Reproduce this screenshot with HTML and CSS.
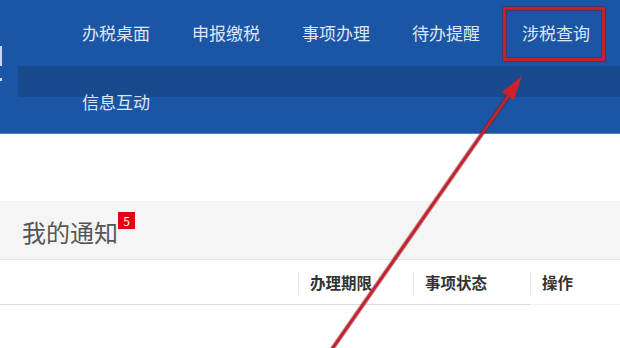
FILE: index.html
```html
<!DOCTYPE html>
<html lang="zh-CN">

<head>
    <meta charset="UTF-8">
    <meta name="viewport" content="width=device-width, initial-scale=1.0">
    <title>办税桌面</title>
    <link rel="stylesheet" href="styles.css">
</head>

<body>
    <div class="page">
        <div class="header">
            <div class="logo-edge">
                <span class="edge-a"></span>
                <span class="edge-b"></span>
            </div>
            <div class="nav-row">
                <a class="nav-item" href="#">办税桌面</a>
                <a class="nav-item" href="#">申报缴税</a>
                <a class="nav-item" href="#">事项办理</a>
                <a class="nav-item" href="#">待办提醒</a>
                <a class="nav-item" href="#">涉税查询</a>
            </div>
            <div class="nav-band"></div>
            <div class="nav-row second">
                <a class="nav-item" href="#">信息互动</a>
            </div>
        </div>

        <div class="spacer"></div>

        <div class="notice-bar">
            <div class="notice-title">我的通知<span class="badge">5</span></div>
        </div>

        <div class="table-head">
            <div class="col col-main"></div>
            <div class="col col-date">办理期限</div>
            <div class="col col-state">事项状态</div>
            <div class="col col-op">操作</div>
        </div>

        <!-- annotation drawn over the screenshot -->
        <svg class="mark" width="620" height="348" viewBox="0 0 620 348">
            <rect x="504.5" y="8.5" width="99" height="51" fill="none" stroke="#6b1018" stroke-opacity="0.35" stroke-width="5" />
            <rect x="504.5" y="8.5" width="99" height="51" fill="none" stroke="#c4202b" stroke-width="3" />
            <line x1="330" y1="352" x2="509" y2="95" stroke="#6b1018" stroke-opacity="0.35" stroke-width="5" />
            <line x1="330" y1="352" x2="509" y2="95" stroke="#c4222c" stroke-width="3" />
            <polygon points="522,76 514,100 502,92" fill="#d0202a" />
        </svg>
    </div>
</body>

</html>
```

FILE: styles.css
```css
body {
    margin: 0;
    background-color: #ffffff;
    font-family: "Noto Sans CJK SC", "Noto Sans", sans-serif;
}

.page {
    position: relative;
    width: 620px;
    height: 348px;
    overflow: hidden;
}

.header {
    position: relative;
    height: 133px;
    background-color: #1b55a5;
    border-bottom: 1px solid #4f82c8;
}

.logo-edge {
    position: absolute;
    left: 0;
    top: 46px;
}

.edge-a,
.edge-b {
    display: block;
    width: 2px;
    background-color: #c7d8ef;
}

.edge-a {
    height: 20px;
}

.edge-b {
    height: 3px;
    margin-top: 12px;
}

.nav-row {
    display: flex;
    height: 66px;
    align-items: center;
    padding-left: 82px;
}

.nav-item {
    flex-shrink: 0;
    width: 110px;
    font-size: 17px;
    line-height: 20px;
    color: #dce6f4;
    text-decoration: none;
}

.nav-band {
    height: 31px;
    margin-left: 18px;
    background-color: #1a4a8e;
}

.nav-row.second {
    height: 36px;
    align-items: flex-start;
}

.nav-row.second .nav-item {
    margin-top: -5px;
}

.spacer {
    height: 67px;
}

.notice-bar {
    height: 58px;
    background-color: #f5f5f5;
    border-bottom: 1px solid #e8e8e8;
    display: flex;
    align-items: center;
    padding-left: 22px;
}

.notice-title {
    display: flex;
    align-items: flex-start;
    font-size: 24px;
    line-height: 30px;
    color: #555555;
    margin-top: 4px;
}

.badge {
    width: 17px;
    height: 17px;
    margin-top: -5px;
    background-color: #e60012;
    color: #ffffff;
    font-size: 12px;
    line-height: 17px;
    text-align: center;
}

.table-head {
    display: flex;
    height: 45px;
    align-items: center;
}

.col {
    height: 45px;
    display: flex;
    align-items: center;
    box-sizing: border-box;
    font-size: 15.5px;
    font-weight: bold;
    color: #333333;
    border-bottom: 1px solid #dcdcdc;
}

.col-main {
    width: 298px;
}

.col-date,
.col-state,
.col-op {
    padding-left: 12px;
    position: relative;
}

.col-date::before,
.col-state::before,
.col-op::before {
    content: "";
    position: absolute;
    left: 0;
    top: 12px;
    width: 1px;
    height: 23px;
    background-color: #e6e6e6;
}

.col-date {
    width: 115px;
}

.col-state {
    width: 117px;
}

.col-op {
    flex: 1;
    border-bottom-color: #f2f2f2;
}

.mark {
    position: absolute;
    left: 0;
    top: 0;
    pointer-events: none;
}
```
